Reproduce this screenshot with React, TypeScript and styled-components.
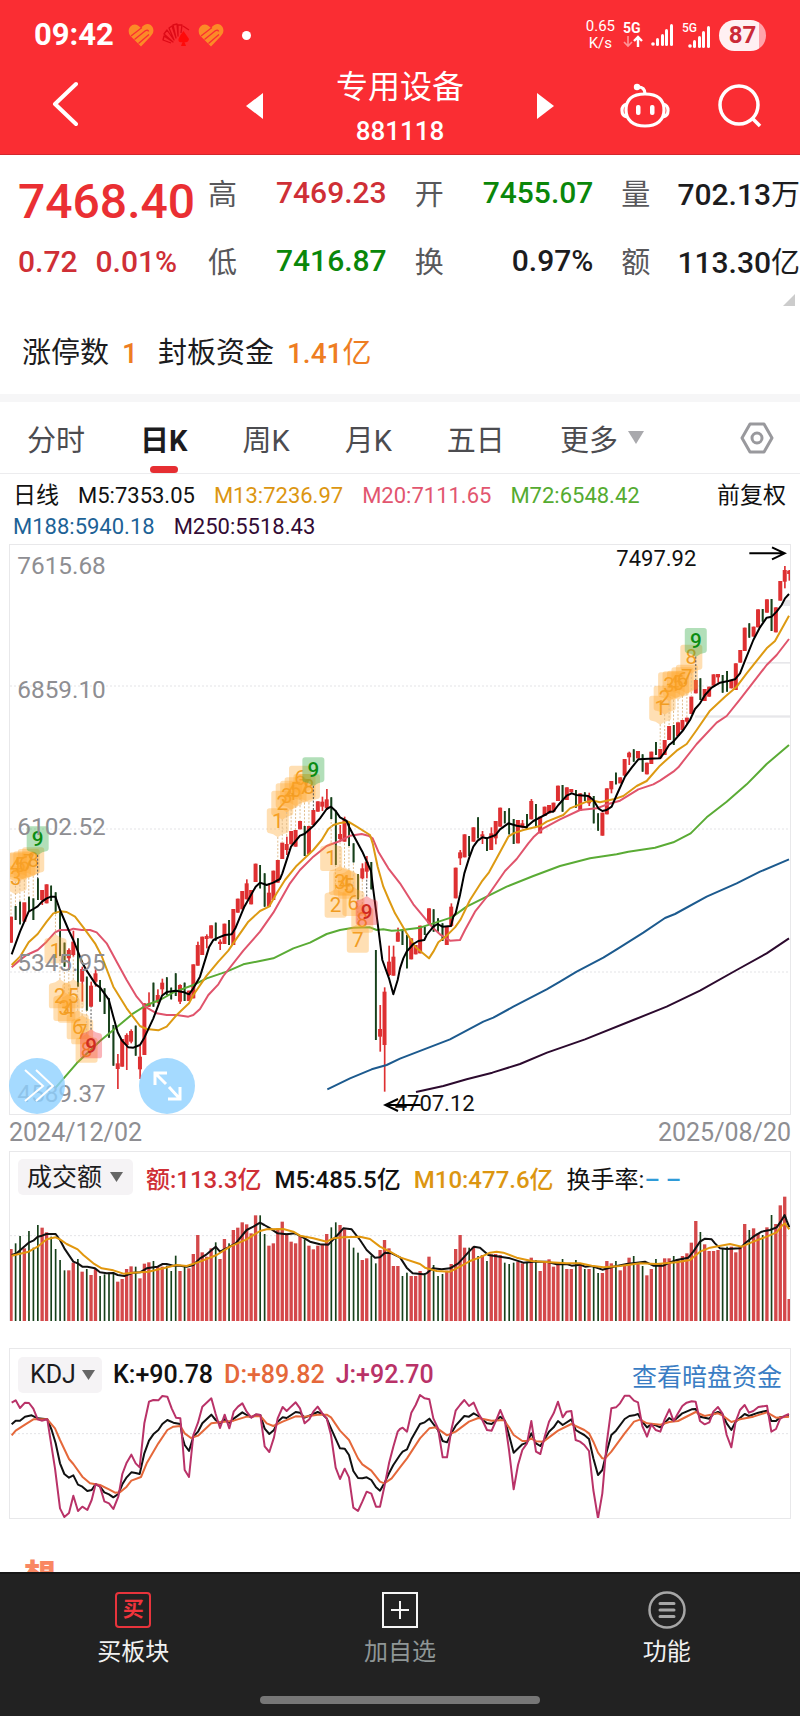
import React from "react";
import styled, { createGlobalStyle } from "styled-components";

const RED = "#cf2f36";
const GREEN = "#0a870a";
const INK = "#1c1c1e";
const ORANGE = "#ee7d22";

const GlobalStyle = createGlobalStyle`
  * { box-sizing: border-box; }
  body { margin: 0; background: #fff; color: ${INK};
    font-family: Roboto, "Noto Sans CJK SC", sans-serif; }
  button, select { font: inherit; color: inherit; border: 0; background: none; padding: 0; margin: 0; cursor: pointer; }
  a { color: inherit; text-decoration: none; }
  h1, p, dl, dd, dt { margin: 0; font-weight: 400; }
  svg { display: block; }
`;

const Page = styled.div`
  min-height: 100vh;
  display: flex;
  flex-direction: column;
`;

/* ---------- header ---------- */
const Header = styled.header`
  background: #fa2d33;
  color: #fff;
  border-bottom: 1px solid #d3272d;
`;
const StatusBar = styled.div`
  height: 66px;
  padding: 4px 34px 0;
  display: flex;
  align-items: center;
  justify-content: space-between;
`;
const StatusGroup = styled.div`
  display: flex;
  align-items: center;
  gap: 8px;
`;
const Clock = styled.time`
  font-size: 31px;
  line-height: 36px;
  font-weight: 700;
  margin-right: 6px;
`;
const Dot = styled.i`
  width: 9px;
  height: 9px;
  margin-left: 10px;
  border-radius: 50%;
  background: #fff;
`;
const Speed = styled.span`
  font-size: 15px;
  line-height: 17px;
  text-align: center;
`;
const Battery = styled.span`
  width: 47px;
  height: 31px;
  border-radius: 16px;
  background: linear-gradient(90deg, #fff0f2 86%, #ffa3aa 86%);
  color: #cb2a37;
  font-size: 24px;
  font-weight: 700;
  line-height: 31px;
  text-align: center;
`;
const NavBar = styled.div`
  height: 88px;
  display: grid;
  grid-template-columns: 1fr 308px 1fr;
`;
const NavSide = styled.div<{ $end?: boolean }>`
  display: flex;
  align-items: center;
  justify-content: ${(p) => (p.$end ? "flex-end" : "flex-start")};
  gap: 48px;
  padding: ${(p) => (p.$end ? "0 38px 8px 0" : "0 0 12px 52px")};
`;
const Switcher = styled.div`
  display: flex;
  align-items: center;
  justify-content: space-between;
`;
const StepButton = styled.button`
  padding-bottom: 8px;
`;
const TitleBlock = styled.div`
  text-align: center;
`;
const Title = styled.h1`
  font-size: 32px;
  line-height: 42px;
`;
const Code = styled.p`
  font-size: 26px;
  font-weight: 500;
  line-height: 46px;
`;

/* ---------- quote ---------- */
const Quote = styled.section`
  padding-top: 3px;
`;
const Summary = styled.div`
  display: grid;
  grid-template-columns: 190px 1fr;
  padding-left: 18px;
`;
const PriceBlock = styled.div`
  color: ${RED};
  white-space: nowrap;
`;
const Price = styled.p`
  font-size: 48px;
  font-weight: 500;
  line-height: 88px;
  height: 74px;
  color: #ea2f33;
`;
const Change = styled.p`
  display: flex;
  gap: 18px;
  font-size: 30px;
  font-weight: 500;
  line-height: 60px;
`;
const Stats = styled.dl`
  display: grid;
  grid-template-columns: repeat(3, 1fr);
  column-gap: 28px;
`;
const Stat = styled.div`
  display: flex;
  justify-content: space-between;
  align-items: center;
  height: 68px;
  white-space: nowrap;
`;
const StatName = styled.dt`
  font-size: 29px;
  color: #58585b;
`;
const StatValue = styled.dd<{ $color: string }>`
  font-size: 30px;
  font-weight: 500;
  color: ${(p) => p.$color};
`;
const Unit = styled.span`
  font-size: 29px;
  font-weight: 400;
`;
const ExpandRow = styled.div`
  display: flex;
  justify-content: flex-end;
  padding-right: 5px;
`;
const LimitRow = styled.div`
  display: flex;
  align-items: baseline;
  height: 88px;
  padding: 26px 22px 0;
  font-size: 29px;
  line-height: 42px;
  gap: 13px;
`;
const LimitValue = styled.span`
  color: ${ORANGE};
  font-size: 28px;
  font-weight: 500;
  margin-right: 7px;
`;
const Band = styled.div`
  height: 8px;
  background: #f6f6f7;
`;

/* ---------- tabs ---------- */
const Tabs = styled.nav`
  display: flex;
  align-items: center;
  gap: 55px;
  height: 72px;
  padding: 0 26px 0 27px;
  border-bottom: 1px solid #ececee;
`;
const Tab = styled.button<{ $active?: boolean }>`
  position: relative;
  display: flex;
  align-items: center;
  gap: 10px;
  height: 71px;
  font-size: 29px;
  white-space: nowrap;
  color: ${(p) => (p.$active ? INK : "#4c4c50")};
  font-weight: ${(p) => (p.$active ? 700 : 400)};
  &::after {
    content: "";
    display: ${(p) => (p.$active ? "block" : "none")};
    position: absolute;
    left: 50%;
    bottom: 0;
    width: 28px;
    height: 7px;
    margin-left: -14px;
    border-radius: 4px;
    background: #e62e32;
  }
`;
const SettingsButton = styled.button`
  margin-left: auto;
`;

/* ---------- chart panels ---------- */
const Averages = styled.div`
  display: flex;
  justify-content: space-between;
  padding: 6px 14px 2px 13px;
  font-size: 22px;
  line-height: 31px;
`;
const AverageList = styled.div`
  display: flex;
  flex-wrap: wrap;
  column-gap: 19px;
`;
const Tinted = styled.span<{ $color?: string; $strong?: boolean; $size?: number }>`
  color: ${(p) => p.$color || "#111"};
  font-weight: ${(p) => (p.$strong ? 500 : 400)};
  font-size: ${(p) => (p.$size ? `${p.$size}px` : "inherit")};
  white-space: nowrap;
`;
const Panel = styled.section<{ $open?: boolean }>`
  position: relative;
  margin: 0 9px;
  border: 1px solid #e8e8ea;
  border-bottom-width: ${(p) => (p.$open ? 0 : 1)}px;
`;
const Plot = styled.svg`
  width: 100%;
  height: auto;
`;
const ChartText = styled.text<{ $size: number }>`
  font-family: Roboto, sans-serif;
  font-size: ${(p) => p.$size}px;
`;
const RoundButton = styled.button<{ $left: number }>`
  position: absolute;
  left: ${(p) => p.$left}px;
  bottom: 0;
  width: 56px;
  height: 56px;
  border-radius: 50%;
  background: rgba(143, 209, 255, 0.8);
`;
const Dates = styled.div`
  display: flex;
  justify-content: space-between;
  padding: 0 9px;
  font-size: 25px;
  line-height: 36px;
  color: #8e8e92;
`;
const PanelHead = styled.div<{ $height: number; $gap: number; $size: number }>`
  display: flex;
  align-items: center;
  gap: ${(p) => p.$gap}px;
  height: ${(p) => p.$height}px;
  padding: 6px 8px 0;
  font-size: ${(p) => p.$size}px;
`;
const PickerWrap = styled.span<{ $inset: number }>`
  position: relative;
  display: block;
  & > svg { position: absolute; right: ${(p) => p.$inset}px; top: 13px; pointer-events: none; }
`;
const Picker = styled.select<{ $width: number; $pad: number }>`
  appearance: none;
  width: ${(p) => p.$width}px;
  height: 36px;
  padding-left: ${(p) => p.$pad}px;
  border-radius: 5px;
  background: #f5f3f5;
  font-size: 25px;
`;
const PanelLink = styled.a`
  margin-left: auto;
  font-size: 25px;
  color: #3a7dc4;
`;
const Spacer = styled.div`
  height: 27px;
`;
const Teaser = styled.div`
  flex: 1 0 53px;
  height: 53px;
  padding: 36px 24px 0;
  overflow: hidden;
  font-size: 32px;
  line-height: 42px;
  font-weight: 900;
  color: #f98762;
`;

/* ---------- bottom bar ---------- */
const Footer = styled.footer`
  background: #222;
  border-top: 2px solid #171717;
  height: 144px;
  display: flex;
  flex-direction: column;
  justify-content: space-between;
  align-items: center;
  padding: 17px 0 12px;
`;
const Actions = styled.nav`
  width: 100%;
  display: grid;
  grid-template-columns: repeat(3, 1fr);
`;
const Action = styled.button<{ $color: string }>`
  display: flex;
  flex-direction: column;
  align-items: center;
  gap: 6px;
  font-size: 24px;
  line-height: 34px;
  color: ${(p) => p.$color};
`;
const BuyBadge = styled.span`
  width: 36px;
  height: 36px;
  margin: 1px;
  border: 2px solid #e8343c;
  border-radius: 4px;
  color: #f0343c;
  font-size: 21px;
  font-weight: 700;
  line-height: 30px;
  text-align: center;
`;
const HomeBar = styled.i`
  width: 35%;
  height: 8px;
  border-radius: 4px;
  background: #777;
`;

/* ---------- chart data ---------- */
type Pt = [number, number];
// The plots use three units per pixel. Readings come in two blocks, each with its own origin.
const STEP = 13.34;
const barX = (i: number) => 3 + i * STEP;

const parse = (s: string): Pt[] =>
  s.trim().split(/\s+/).map((p) => p.split(",").map(Number) as Pt);
const join = (first: string, dy1: number, second: string, dy2: number) =>
  [
    ...parse(first).map(([x, y]) => [x - 30, y + dy1]),
    ...(second ? parse(second).map(([x, y]) => [x + 1170, y + dy2]) : []),
  ]
    .map((p) => p.join(","))
    .join(" ");

// colour, body top-bottom, optional wick top-bottom
const CANDLES_A = `r530-608 g498-540 g485-553 r487-545 g470-513 g475-540 g415-480 r450-480/450-495 r433-490 g437-483
g457-520 g513-648 g608-680 r630-655/625-690 r605-645/572-650 g595-740 r687-725/680-785 g710-812 r737-800/725-800 r700-725/688-740
g720-785 g745-822 g775-893 g855-977 r970-987/942-1047 r897-980 r885-915/880-990 r873-905/868-910 g857-947 r950-988/918-1017
r790-945 r790-800/757-800 g728-800 r765-787/748-790 r728-748/716-765 g712-765 g743-778 g700-768 r735-785/733-792 g728-783
r752-783 r673-775 r615-677/605-677 r590-645 r588-597/583-625 r556-595 g548-602 r605-612/598-630 r551-612 g540-615
r507-615 r476-518 r453-508 r430-478/418-478 r450-493 r371-426 g375-445 g400-500 r458-500/430-500 r392-480
r360-428 r308-357 r312-330/290-345 r273-313 r270-320 r243-268 g258-348 r258-342 r210-255 r184-215
r185-200/170-213 r178-205/147-210 g172-237 g212-375 r282-297/255-305 r240-305/230-305 g250-318 g310-367 g402-478 r385-415/370-418
r365-395/348-415 g366-448 g630-900 r867-890/795-935 r755-915/742-1055 r665-705/617-708 r650-707/617-707 r577-605/563-605`;
const CANDLES_B = `g1170-1215 g1185-1285 r1195-1258 r1215-1243 r1157-1240 g1160-1185 r1105-1150 g1108-1175 g1135-1175 g1150-1203
r1160-1215 r1100-1158/1090-1160 r983-1075 r937-955/930-975 r883-952 g888-948 r862-905 g832-895 r883-890/873-912 g893-933
r880-930/862-930 r843-895/843-913 r803-860 g813-850 g805-883 g837-912 r840-910 r850-863/840-865 g822-870 r783-838/777-838
g792-858 r830-880 r800-828 r795-820 r788-815 r737-783 g735-815 r742-780 r747-757 g750-803
r760-812 g757-783 r768-790/758-798 g768-850 g820-872 r818-887 r745-823 r723-748/723-760 g698-733 r712-730
r657-707 r638-652/635-675 g628-665 r633-655 g643-695 r668-703 r635-672 g606-645 r627-655 r600-645
r558-600 g555-615 r547-588 r540-570 r533-545/533-555 r470-522 r420-460 g415-480 r447-483 r440-470
r403-437 r402-412/402-428 g405-458 g393-455 r420-445 r370-450 r330-368 r263-333 g250-293 r260-290
r208-262 g207-245 r178-218 g177-273 r202-277 r123-182 r90-125/78-145 r92-102/90-122`;

interface Candle { up: boolean; top: number; bottom: number; high: number; low: number }
const readCandles = (s: string, dy: number): Candle[] =>
  s.trim().split(/\s+/).map((c) => {
    const [body, wick] = c.slice(1).split("/");
    const [top, bottom] = body.split("-").map((n) => Number(n) + dy);
    const [high, low] = wick ? wick.split("-").map((n) => Number(n) + dy) : [top, bottom];
    return { up: c[0] === "r", top, bottom, high, low };
  });
const candles = [...readCandles(CANDLES_A, 585), ...readCandles(CANDLES_B, -15)];

const averages = [
  { color: "#5aab35", points: join(
    "165,1045 230,970 300,903 350,862 400,820 440,795 480,780 520,757 580,735 620,715 680,695 730,673 780,663 820,655 880,625 930,608 980,582 1020,570 1060,563 1110,562 1130,570 1150,568 1175,572 1200,571", 585,
    "60,1163 100,1150 155,1132 200,1100 260,1070 320,1040 400,1008 480,978 570,955 650,943 685,935 765,923 820,907 872,880 920,832 980,785 1040,733 1100,672 1167,615", -15) },
  { color: "#1c5a8e", points: join("982,1048 1050,1015 1115,988 1160,975 1200,956", 585,
    "150,1498 250,1445 280,1433 340,1400 440,1348 480,1325 530,1295 610,1253 655,1225 730,1178 795,1134 825,1122 920,1070 1010,1030 1080,995 1167,958", -15) },
  { color: "#2c0a2e", points: join("1248,1056 1330,1038 1400,1018 1477,998 1560,972 1641,938", 585,
    "555,1498 700,1440 800,1400 900,1352 1010,1290 1100,1240 1167,1195", -15) },
  { color: "#e0546c", points: join(
    "35,682 60,660 80,645 113,630 140,605 165,577 180,570 210,570 220,566 245,570 270,570 290,577 320,610 350,665 380,720 410,770 435,800 470,820 500,825 530,825 565,830 580,825 600,807 625,765 655,733 670,708 730,632 780,575 820,518 870,430 900,390 940,350 980,318 1020,303 1050,287 1085,282 1105,287 1118,295 1135,335 1165,385 1200,430", 585,
    "40,1093 75,1135 100,1165 120,1183 150,1202 180,1200 195,1170 225,1115 265,1065 315,993 350,957 385,910 400,892 430,865 480,838 540,810 590,805 625,792 660,782 715,748 760,733 780,722 820,695 835,682 890,612 950,548 980,528 1020,478 1100,375 1130,345 1167,297", -15) },
  { color: "#dd9a12", points: join(
    "35,675 60,650 86,607 113,582 140,545 160,520 180,514 200,516 225,530 250,562 285,610 305,648 340,740 380,805 420,858 440,867 475,871 500,860 530,825 567,790 580,765 620,707 655,665 685,632 710,595 745,545 780,513 807,500 830,460 855,420 890,377 940,330 965,300 985,267 1000,255 1020,249 1045,245 1070,260 1110,285 1118,310 1133,380 1150,440 1167,480 1185,520 1200,545", 585,
    "20,1180 47,1222 87,1255 100,1235 115,1207 140,1187 165,1162 182,1138 210,1080 245,1025 267,997 290,955 325,890 340,880 370,870 420,858 440,845 490,825 510,805 560,785 580,782 600,787 640,778 670,768 710,738 740,723 780,677 830,632 860,612 890,570 930,512 975,470 1010,440 1040,400 1100,325 1125,303 1150,258 1167,227", -15) },
  { color: "#000", points: join(
    "35,643 60,575 86,515 100,507 113,499 126,485 140,475 153,470 166,470 180,510 207,573 220,600 247,668 260,692 287,733 300,742 326,778 340,830 353,877 366,902 385,922 400,923 420,915 433,893 460,835 486,767 500,756 527,752 553,757 567,763 580,745 600,710 627,622 640,600 655,593 675,585 695,583 707,563 733,500 767,440 780,428 800,435 820,428 840,417 847,400 873,320 900,287 913,282 940,258 960,235 980,207 993,200 1007,213 1020,232 1040,243 1047,260 1060,285 1087,335 1113,393 1120,450 1133,550 1147,660 1167,715 1180,763 1193,720 1200,685", 585,
    "10,1255 20,1235 40,1212 55,1203 73,1200 80,1185 100,1160 113,1152 127,1160 153,1158 160,1130 167,1120 180,1065 193,1000 207,955 220,920 233,902 247,892 260,895 287,885 300,868 325,850 350,857 378,862 400,843 415,835 440,822 450,815 460,815 475,795 500,767 515,760 530,765 565,768 580,780 595,805 607,813 620,810 635,800 650,765 675,710 695,683 715,658 780,655 793,638 807,615 820,605 850,570 870,540 885,507 900,490 915,465 935,443 960,428 985,423 1005,418 1020,400 1035,362 1060,300 1080,262 1100,233 1115,230 1130,215 1145,195 1155,175 1167,162", -15) },
];

// Nine-count marks: first candle index, first count, centre height of each mark
const counts = [
  { start: 0, from: 3, above: true, ys: [1000, 963, 960, 957, 950, 945, 882] },
  { start: 60, from: 1, above: true, ys: [828, 775, 753, 745, 735, 700, 725, 725, 675] },
  { start: 146, from: 1, above: true, ys: [490, 460, 420, 417, 415, 405, 397, 337, 287] },
  { start: 10, from: 1, above: false, ys: [1217, 1352, 1390, 1395, 1352, 1445, 1460, 1515, 1502] },
  { start: 72, from: 1, above: false, ys: [940, 1080, 1012, 1015, 1023, 1075, 1185, 1125, 1102] },
];

const VOLUMES = `447 430 408 445 393 443 375 383 397 410 447 480 511 511 488 477 515 507 525 507 528 523 518 518 545 537 507 499 500 535
491 487 483 500 500 497 513 467 513 500 505 462 405 457 470 445 427 477 417 430 390 383 367 373 400 346 346 402 437 430
385 365 400 425 430 408 418 437 448 437 435 402 382 367 375 388 418 443 458 480 475 467 490 450 420 445 498 498
528 518 528 528 513 520 470 495 528 522 512 492 447 405 443 443 440 468 465 483 463 462 465 488 492 488 485 490 487 473
480 513 485 478 500 490 477 507 507 480 490 507 507 500 519 519 483 490 483 511 492 473 468 487 498 526 507 477 490 475
475 468 478 468 460 428 363 396 433 453 453 450 445 440 440 457 440 372 390 385 400 405 382 345 372 316 290 597`;
const volumes = VOLUMES.trim().split(/\s+/).map((v) => Number(v) - 288);

const volumeLines = [
  { color: "#111", points: join(
    "35,465 50,460 86,428 100,422 113,410 126,407 140,402 167,402 180,420 193,445 220,485 233,490 247,500 262,500 285,505 300,517 320,520 340,519 353,525 373,528 400,518 420,517 440,505 460,502 473,500 488,492 500,492 520,497 540,497 560,500 580,495 600,475 620,463 647,440 660,455 685,442 707,430 740,390 760,380 780,368 793,375 807,383 833,400 860,403 885,400 905,410 930,425 960,433 985,434 1010,408 1030,385 1055,388 1080,420 1100,450 1125,473 1140,472 1155,458 1175,460 1200,472", -288,
    "20,503 38,520 70,523 80,520 98,505 125,508 150,505 175,490 207,455 222,440 240,443 265,465 285,468 330,475 370,488 400,485 440,485 470,493 500,492 515,497 540,494 555,500 575,498 607,509 640,500 680,492 735,485 760,497 790,497 810,487 830,480 865,473 880,455 900,425 915,416 935,418 945,430 960,445 980,447 1020,445 1035,430 1060,410 1085,395 1110,390 1130,382 1142,365 1154,345 1160,362 1168,382", -288) },
  { color: "#e2970e", points: join(
    "35,467 86,455 113,440 140,418 167,412 180,418 200,432 233,448 250,465 280,490 305,505 340,511 370,521 400,518 420,517 445,515 490,505 530,495 560,498 600,485 650,465 690,440 740,418 780,393 800,388 850,387 880,395 900,407 940,415 980,425 1000,415 1030,412 1080,410 1110,417 1140,440 1170,455 1200,472", -288,
    "60,492 75,503 110,513 150,515 180,500 210,483 240,472 270,458 290,455 310,458 350,473 395,483 450,487 500,490 540,490 575,497 610,502 660,498 720,490 770,492 830,487 870,480 900,455 930,443 990,432 1025,440 1060,425 1100,410 1130,397 1145,378 1155,370 1160,378 1168,388", -288) },
];

const kdjLines = [
  { color: "#111", points: join(
    "35,253 47,242 60,242 75,230 95,226 113,235 142,238 155,270 167,310 180,370 193,402 207,413 220,406 234,434 247,440 262,453 275,450 287,432 300,440 313,457 327,463 340,472 355,462 367,433 380,412 394,397 407,399 419,402 433,340 447,302 460,283 475,270 487,252 502,240 520,248 541,252 547,290 554,315 567,333 580,290 594,275 607,250 634,224 647,240 660,250 674,238 688,248 701,236 727,217 740,225 754,232 768,224 781,225 794,266 808,282 822,270 833,245 848,232 860,234 887,216 900,218 914,233 940,222 953,216 967,222 980,235 993,265 1020,325 1034,326 1047,345 1060,393 1074,414 1087,415 1100,412 1114,420 1128,442 1140,452 1153,430 1167,400 1180,375 1200,345", -162,
    "8,335 21,328 34,298 60,252 74,247 88,236 100,252 114,270 128,303 141,307 154,280 167,257 193,228 207,230 221,220 235,228 261,250 275,252 301,230 315,242 327,285 341,338 367,313 381,308 394,280 408,310 421,318 434,298 447,275 461,262 474,243 488,255 514,238 527,270 540,278 553,285 567,297 580,355 594,405 607,390 620,335 634,285 648,272 674,237 688,228 702,226 714,222 727,245 741,262 754,253 767,256 781,262 808,234 821,243 847,220 875,208 887,207 900,230 928,236 940,222 954,216 967,222 980,250 994,270 1007,245 1034,222 1047,228 1075,218 1101,212 1114,243 1128,243 1140,232 1167,228", -162) },
  { color: "#e5683a", points: join(
    "35,286 47,272 75,254 100,238 142,238 165,265 180,300 207,357 220,372 247,410 270,430 287,433 300,435 327,448 345,458 360,457 380,440 394,422 423,411 440,370 475,310 502,270 520,260 541,258 554,280 573,294 594,287 634,250 660,247 701,242 740,230 781,228 800,250 820,258 848,245 887,229 914,230 953,224 980,224 993,232 1020,272 1047,300 1074,355 1087,373 1114,392 1140,425 1153,430 1175,415 1200,382", -162,
    "21,355 60,295 88,265 108,262 141,286 167,275 207,245 235,234 275,242 312,240 327,262 341,285 367,303 381,303 394,295 408,304 430,305 447,292 474,272 514,252 553,270 567,280 580,305 594,338 607,355 615,356 634,335 674,280 702,245 720,239 741,250 781,254 808,246 834,243 887,216 914,228 954,220 967,226 994,246 1020,238 1060,230 1101,217 1128,233 1167,230", -162) },
  { color: "#b93268", points: join(
    "35,188 47,181 60,204 75,188 87,189 100,206 113,238 125,242 142,238 150,290 165,385 180,505 193,531 207,519 220,467 234,513 247,500 262,510 275,480 287,432 300,440 313,484 327,490 340,507 355,470 367,402 380,368 394,344 407,370 419,382 433,250 447,185 460,180 475,181 487,168 502,170 515,205 528,233 541,235 547,300 554,390 567,411 580,285 594,248 607,200 634,175 647,222 660,264 674,224 688,265 701,215 714,200 727,190 740,215 754,233 768,223 781,225 794,319 808,336 822,292 833,235 848,201 860,213 873,200 887,187 900,205 914,250 928,238 940,215 953,200 967,220 980,235 993,285 1007,383 1020,417 1034,386 1047,412 1060,503 1074,513 1087,485 1100,455 1114,461 1128,500 1140,500 1153,440 1167,370 1180,320 1193,275 1200,267", -162,
    "8,263 21,275 34,218 47,195 60,165 74,175 88,178 100,235 114,265 128,352 141,352 154,270 167,212 180,195 193,180 207,198 221,188 235,220 247,240 261,270 275,272 288,242 301,210 315,245 327,330 341,448 354,375 367,330 381,310 394,243 408,335 421,342 434,290 447,245 461,220 474,185 488,232 500,215 514,213 527,300 540,305 553,315 567,333 580,450 594,535 607,460 620,310 634,205 648,202 660,190 674,167 688,167 702,182 714,187 727,258 741,290 754,253 767,270 781,275 794,238 808,208 821,243 834,220 847,198 860,188 875,184 887,185 900,243 914,253 928,247 940,215 954,201 967,220 980,285 994,322 1007,245 1020,210 1034,195 1047,218 1060,213 1075,201 1101,197 1114,275 1128,267 1140,237 1155,227 1167,222", -162) },
];

const stats = [
  { name: "高", value: "7469.23", color: RED },
  { name: "开", value: "7455.07", color: GREEN },
  { name: "量", value: "702.13", unit: "万", color: INK },
  { name: "低", value: "7416.87", color: GREEN },
  { name: "换", value: "0.97%", color: INK },
  { name: "额", value: "113.30", unit: "亿", color: INK },
];

/* ---------- icons ---------- */
const HeartIcon = () => (
  <svg width="26" height="23" viewBox="0 0 26 23">
    <path d="M13 22.500L2 11.500C-2 5 4 -2 10 1.500L13 4C17 -1 22 -1 24.500 3C26.500 7 25 10 22.500 12.500Z" fill="#fc8a27" />
    <path d="M3 12L14 3.500M6.500 15.500L17 7Q20 5 20.500 7.500M10.500 19.500L21 10.500" fill="none" stroke="#fa2d33" strokeWidth="1.300" />
  </svg>
);
const FanIcon = () => (
  <svg width="28" height="24" viewBox="0 0 28 24" fill="none" stroke="#dd0a16" strokeWidth="1.3">
    <path d="M9 20L1 17L2 13L11 19L2 11L5 7L12 17L7 5L10 3L14 15L11 2L15 1L16 13L16 2L20 2L19 10M21 3L27 7" strokeLinejoin="round" />
    <path d="M21.500 8Q25 13 27 16Q26 20 22.500 19L24 23H19L20.500 19Q16 20 16.500 16Q18 12 21.500 8Z" fill="#ff0a0a" stroke="none" />
  </svg>
);
const Signal = () => (
  <>
    <circle cx="2" cy="20" r="1.8" />
    <rect x="5" y="14" width="3" height="8" rx="1.5" />
    <rect x="10" y="10" width="3" height="12" rx="1.5" />
    <rect x="14" y="5" width="3" height="17" rx="1.5" />
    <rect x="19" y="0" width="3" height="22" rx="1.5" />
  </>
);
const Down = ({ w = 13, color = "#666" }: { w?: number; color?: string }) => (
  <svg width={w} height={w - 3} viewBox="0 0 12 9" preserveAspectRatio="none" aria-hidden="true">
    <path d="M0 0H12L6 9Z" fill={color} />
  </svg>
);

/* ---------- plots ---------- */
const Lines = ({ data, width }: { data: { color: string; points: string }[]; width: number }) => (
  <g fill="none" strokeWidth={width} strokeLinejoin="round">
    {data.map((l) => (
      <polyline key={l.color} points={l.points} stroke={l.color} />
    ))}
  </g>
);
const Rule = ({ y }: { y: number }) => (
  <path d={`M0 ${y}H2340`} stroke="#e3e3e6" strokeWidth="3" strokeDasharray="6 6" />
);

const CountMark = ({ i, n, y, above }: { i: number; n: number; y: number; above: boolean }) => {
  const x = Math.max(barX(i), 17);
  const last = n === 9;
  const fill = last ? (above ? "#2aa53c" : "#f2303c") : "#ffa62b";
  const ink = last ? (above ? "#0b8c12" : "#cf2a22") : "#f19c22";
  const tip = above ? 1 : -1;
  const edge = above ? candles[i].high : candles[i].low;
  return (
    <g>
      <path d={`M${barX(i)} ${y + tip * 48}V${edge}`} stroke={last ? "#555" : "#e0bd8c"} strokeWidth="3" strokeDasharray="6 5" />
      <path
        transform={`translate(${x} ${y}) scale(1 ${tip})`}
        d="M-25 -38H25Q33 -38 33 -30V28Q33 36 25 37L14 40L0 49L-14 40L-25 37Q-33 36 -33 28V-30Q-33 -38 -25 -38Z"
        fill={fill}
        opacity="0.36"
      />
      <ChartText $size={62} x={x} y={y + 21} textAnchor="middle" fill={ink} fontWeight={last ? 500 : 400}>
        {n}
      </ChartText>
    </g>
  );
};

const PricePlot = () => (
  <Plot viewBox="0 0 2340 1707" role="img" aria-label="日K线图">
    <Rule y={423} />
    <Rule y={852} />
    <Rule y={1281} />
    <g fill="#e7e7ea">
      <rect x="2055" y="511" width="285" height="7" />
      <rect x="2210" y="351" width="130" height="5" />
      <rect x="2320" y="165" width="20" height="18" />
    </g>
    <g>
      {candles.map((c, i) => (
        <g key={i} fill={c.up ? "#de3032" : "#16401a"}>
          <rect x={barX(i) - (c.up ? 6 : 2)} y={c.top} width={c.up ? 12 : 5} height={c.bottom - c.top} />
          <rect x={barX(i) - 2} y={c.high} width="5" height={c.low - c.high} />
        </g>
      ))}
    </g>
    <Lines data={averages} width={6} />
    {counts.map((c) =>
      c.ys.map((y, k) => (
        <CountMark key={`${c.start}-${k}`} i={c.start + k} n={c.from + k} y={y} above={c.above} />
      ))
    )}
    <g fill="#8e8e92">
      <ChartText $size={73} x="22" y="88">7615.68</ChartText>
      <ChartText $size={73} x="22" y="459">6859.10</ChartText>
      <ChartText $size={73} x="22" y="871">6102.52</ChartText>
      <ChartText $size={73} x="22" y="1279">5345.95</ChartText>
      <ChartText $size={73} x="22" y="1671">4589.37</ChartText>
    </g>
    <g fill="#111">
      <ChartText $size={66} x="1819" y="64">7497.92</ChartText>
      <ChartText $size={66} x="1154" y="1698">4707.12</ChartText>
    </g>
    <g fill="none" stroke="#000" strokeWidth="6">
      <path d="M2218 25H2324M2286 7L2324 25L2286 43" />
      <path d="M1232 1680H1126M1164 1662L1126 1680L1164 1698" />
    </g>
  </Plot>
);

const VolumePlot = () => (
  <Plot viewBox="0 0 2340 375" role="img" aria-label="成交额">
    <Rule y={119} />
    {volumes.map((v, i) => (
      <rect key={i} x={barX(i) - (candles[i].up ? 5 : 2)} y={v} width={candles[i].up ? 10 : 5} height={375 - v}
        fill={candles[i].up ? "#d4484a" : "#16401a"} />
    ))}
    <Lines data={volumeLines} width={6} />
  </Plot>
);

const KdjPlot = () => (
  <Plot viewBox="0 0 2340 372" role="img" aria-label="KDJ">
    <Rule y={119} />
    <Lines data={kdjLines} width={6} />
  </Plot>
);

export default function App() {
  return (
    <Page>
      <GlobalStyle />
      <Header>
        <StatusBar>
          <StatusGroup>
            <Clock>09:42</Clock>
            <HeartIcon />
            <FanIcon />
            <HeartIcon />
            <Dot />
          </StatusGroup>
          <StatusGroup>
            <Speed>0.65<br />K/s</Speed>
            <svg width="20" height="26" viewBox="0 0 20 26" fill="none" stroke="#fff" strokeWidth="2.4">
              <ChartText $size={14} x="0" y="11" fill="#fff" stroke="none" fontWeight={700}>5G</ChartText>
              <path d="M5 14V24M1 20L5 24L9 20" opacity="0.5" strokeWidth="1.6" />
              <path d="M15 25V15M11 19L15 15L19 19" />
            </svg>
            <svg width="23" height="22" viewBox="0 0 23 22" fill="#fff"><Signal /></svg>
            <svg width="29" height="26" viewBox="0 0 29 26" fill="#fff">
              <ChartText $size={12} x="0" y="10" fontWeight={500}>5G</ChartText>
              <g transform="translate(6 4)"><Signal /></g>
            </svg>
            <Battery>87</Battery>
          </StatusGroup>
        </StatusBar>
        <NavBar>
          <NavSide>
            <button aria-label="返回">
              <svg width="26" height="46" viewBox="0 0 26 46" fill="none" stroke="#fff" strokeWidth="4" strokeLinecap="round" strokeLinejoin="round">
                <path d="M24 3L3 23L24 43" />
              </svg>
            </button>
          </NavSide>
          <Switcher>
            <StepButton aria-label="上一个">
              <svg width="17" height="26" viewBox="0 0 17 26" fill="#fff"><path d="M17 0V26L0 13Z" /></svg>
            </StepButton>
            <TitleBlock>
              <Title>专用设备</Title>
              <Code>881118</Code>
            </TitleBlock>
            <StepButton aria-label="下一个">
              <svg width="17" height="26" viewBox="0 0 17 26" fill="#fff"><path d="M0 0V26L17 13Z" /></svg>
            </StepButton>
          </Switcher>
          <NavSide $end>
            <button aria-label="智能助手">
              <svg width="50" height="46" viewBox="0 0 50 46" fill="none" stroke="#fff" strokeWidth="3.2">
                <path d="M25 11C38 11 44 17 44 27C44 37 37 43 25 43C13 43 6 37 6 27C6 17 12 11 25 11Z" />
                <path d="M7 21Q2 22 2 27.500Q2 33 7 34M43 21Q48 22 48 27.500Q48 33 43 34M25 11Q25 4 18 4" />
                <circle cx="17" cy="4" r="3.200" fill="#fff" stroke="none" />
                <rect x="16" y="22" width="4.500" height="10" rx="2" fill="#fff" stroke="none" />
                <rect x="30" y="22" width="4.500" height="10" rx="2" fill="#fff" stroke="none" />
              </svg>
            </button>
            <button aria-label="搜索">
              <svg width="44" height="44" viewBox="0 0 44 44" fill="none" stroke="#fff" strokeWidth="3.500">
                <circle cx="21" cy="21" r="19" />
                <path d="M34 34L42 42" />
              </svg>
            </button>
          </NavSide>
        </NavBar>
      </Header>

      <Quote>
        <Summary>
          <PriceBlock>
            <Price>7468.40</Price>
            <Change><span>0.72</span><span>0.01%</span></Change>
          </PriceBlock>
          <Stats>
            {stats.map((s) => (
              <Stat key={s.name}>
                <StatName>{s.name}</StatName>
                <StatValue $color={s.color}>{s.value}{s.unit && <Unit>{s.unit}</Unit>}</StatValue>
              </Stat>
            ))}
          </Stats>
        </Summary>
        <ExpandRow>
          <svg width="12" height="12" viewBox="0 0 12 12"><path d="M12 0V12H0Z" fill="#ccc" /></svg>
        </ExpandRow>
        <LimitRow>
          <span>涨停数</span><LimitValue>1</LimitValue>
          <span>封板资金</span><LimitValue>1.41<Unit>亿</Unit></LimitValue>
        </LimitRow>
      </Quote>
      <Band />

      <Tabs>
        <Tab>分时</Tab>
        <Tab $active aria-current="true">日K</Tab>
        <Tab>周K</Tab>
        <Tab>月K</Tab>
        <Tab>五日</Tab>
        <Tab aria-haspopup="menu">更多<Down w={16} color="#a9a9ad" /></Tab>
        <SettingsButton aria-label="图表设置">
          <svg width="34" height="32" viewBox="0 0 34 32" fill="none" stroke="#99999d" strokeWidth="3">
            <path d="M10 2H24L32 16L24 30H10L2 16Z" strokeLinejoin="round" />
            <circle cx="17" cy="16" r="5" />
          </svg>
        </SettingsButton>
      </Tabs>

      <Averages>
        <AverageList>
          <Tinted $size={23}>日线</Tinted>
          <Tinted>M5:7353.05</Tinted>
          <Tinted $color="#dc9611">M13:7236.97</Tinted>
          <Tinted $color="#e2566f">M20:7111.65</Tinted>
          <Tinted $color="#55ab31">M72:6548.42</Tinted>
          <Tinted $color="#1d6296">M188:5940.18</Tinted>
          <Tinted $color="#330b35">M250:5518.43</Tinted>
        </AverageList>
        <Tinted $size={23}>前复权</Tinted>
      </Averages>
      <Panel>
        <PricePlot />
        <RoundButton $left={-1} aria-label="展开">
          <svg width="56" height="56" viewBox="0 0 56 56" fill="none" stroke="#fff" strokeWidth="2">
            <path d="M16 12L34 28L16 43M27 12L44 28L27 43" />
          </svg>
        </RoundButton>
        <RoundButton $left={129} aria-label="全屏">
          <svg width="56" height="56" viewBox="0 0 56 56" fill="none" stroke="#fff" strokeWidth="3">
            <path d="M27 26L16 15M16 27V15H28M30 29L41 41M41 29V41H29" />
          </svg>
        </RoundButton>
      </Panel>
      <Dates>
        <time>2024/12/02</time>
        <time>2025/08/20</time>
      </Dates>

      <Panel $open>
        <PanelHead $height={44} $gap={13} $size={24}>
          <PickerWrap $inset={10}>
            <Picker aria-label="成交指标" $width={115} $pad={9}><option>成交额</option></Picker>
            <Down />
          </PickerWrap>
          <Tinted $color={RED} $strong>额:113.3亿</Tinted>
          <Tinted $strong>M5:485.5亿</Tinted>
          <Tinted $color="#dc9611" $strong>M10:477.6亿</Tinted>
          <Tinted>换手率:<Tinted $color="#2f9bd8" $strong>– –</Tinted></Tinted>
        </PanelHead>
        <VolumePlot />
      </Panel>
      <Spacer />
      <Panel>
        <PanelHead $height={45} $gap={11} $size={25}>
          <PickerWrap $inset={7}>
            <Picker aria-label="技术指标" $width={84} $pad={12}><option>KDJ</option></Picker>
            <Down />
          </PickerWrap>
          <Tinted $strong>K:+90.78</Tinted>
          <Tinted $color="#e5683a" $strong>D:+89.82</Tinted>
          <Tinted $color="#b93268" $strong>J:+92.70</Tinted>
          <PanelLink href="#funds">查看暗盘资金</PanelLink>
        </PanelHead>
        <KdjPlot />
      </Panel>
      <Teaser>想</Teaser>

      <Footer>
        <Actions>
          <Action $color="#f1f1f1"><BuyBadge>买</BuyBadge>买板块</Action>
          <Action $color="#8f9696">
            <svg width="38" height="38" viewBox="0 0 38 38" fill="none" stroke="#f5f5f5" strokeWidth="2">
              <path d="M2 2H36V36H2ZM19 10V28M10 19H28" />
            </svg>
            加自选
          </Action>
          <Action $color="#f1f1f1">
            <svg width="38" height="38" viewBox="0 0 38 38" fill="none" stroke="#a6a6a6" strokeWidth="3">
              <circle cx="19" cy="19" r="17.500" strokeWidth="2.500" />
              <path d="M12 12.500H26M12 19H26M12 25.500H26" strokeLinecap="round" />
            </svg>
            功能
          </Action>
        </Actions>
        <HomeBar />
      </Footer>
    </Page>
  );
}
